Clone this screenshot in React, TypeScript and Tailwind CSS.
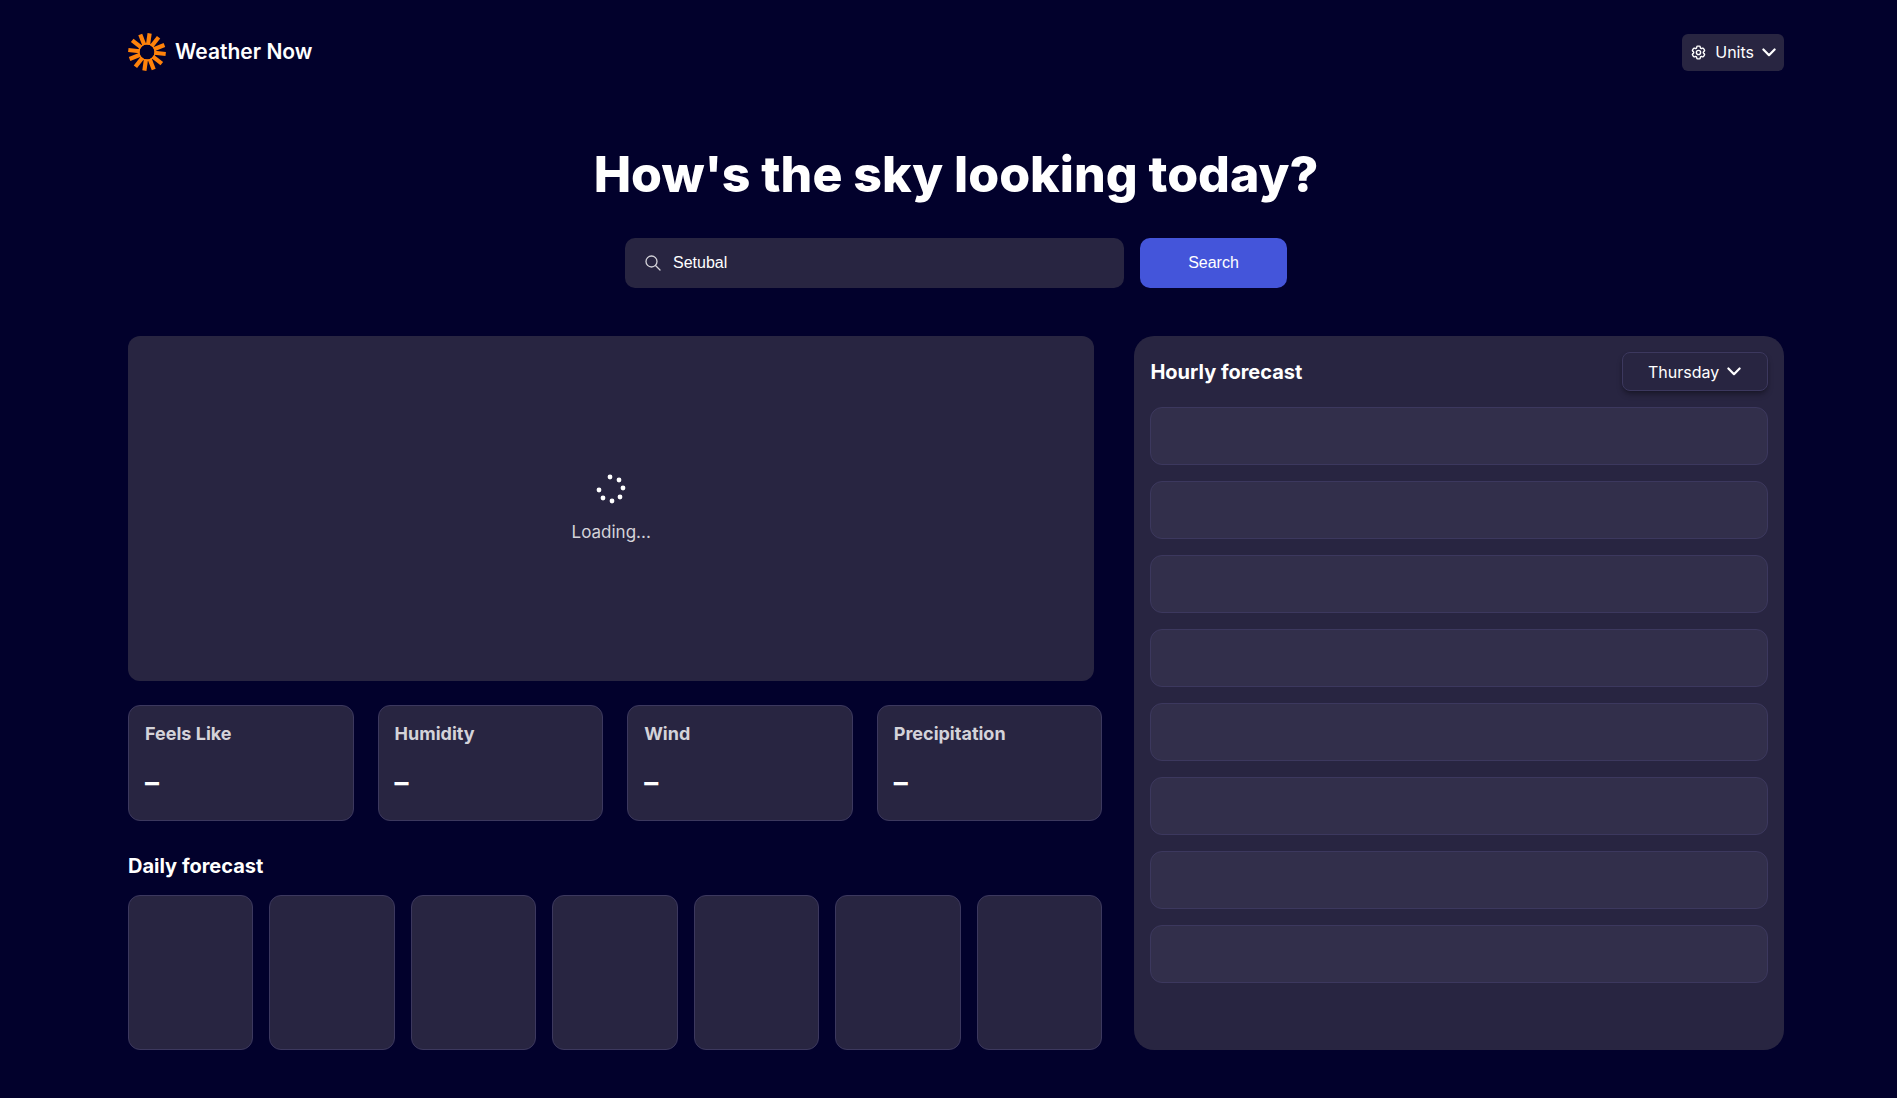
import React from "react";
import { HiOutlineCog6Tooth } from "react-icons/hi2";

const stats = ["Feels Like", "Humidity", "Wind", "Precipitation"];
const days = ["Monday", "Tuesday", "Wednesday", "Thursday", "Friday", "Saturday", "Sunday"];
const rays = [8, 38, 68, 96, 128, 159, 188, 218, 248, 276, 308, 339];
const dots = [
  [14, 3], [23, 6], [27, 14], [24, 23], [16, 27], [7, 24], [3, 16],
];

function SunLogo() {
  return (
    <svg viewBox="-19 -19 38 38" className="size-[38px]" aria-hidden="true">
      {rays.map((angle) => (
        <rect key={angle} x="-2.1" y="-18.8" width="4.2" height="11.4" fill="#ff820a" transform={`rotate(${angle})`} />
      ))}
      <circle r="8.2" fill="none" stroke="#ff820a" strokeWidth="1.4" />
    </svg>
  );
}

function Chevron() {
  return (
    <svg viewBox="0 0 14 9" className="h-[9px] w-3.5" fill="none" stroke="white" strokeWidth="2.2" strokeLinecap="round" strokeLinejoin="round" aria-hidden="true">
      <path d="M1.4 1.5 7 7.2l5.600-5.700" />
    </svg>
  );
}

export default function App() {
  return (
    <div className="min-h-screen bg-[#02012c] pt-8 pr-[113px] pb-12 pl-32 font-['Inter',sans-serif] text-white">
      <header className="flex h-10 items-center justify-between">
        <a href="#" className="flex items-center gap-[9px]">
          <SunLogo />
          <span className="text-[21px] font-semibold">Weather Now</span>
        </a>
        <button type="button" className="flex h-[37px] items-center gap-2 rounded-md bg-[#282541] px-2 text-base">
          <HiOutlineCog6Tooth className="size-[17px]" strokeWidth={2} aria-hidden="true" />
          Units
          <Chevron />
        </button>
      </header>

      <main>
        <h1 className="mt-[72px] text-center text-[50px] leading-[60px] font-extrabold">How's the sky looking today?</h1>

        <form className="mx-auto mt-[34px] flex w-full max-w-[662px] gap-4 font-['Liberation_Sans',sans-serif] text-base" onSubmit={(e) => e.preventDefault()}>
          <label className="flex h-[50px] flex-1 items-center gap-3 rounded-[10px] bg-[#282541] px-5">
            <svg viewBox="0 0 16 16" className="size-4" fill="none" stroke="#d4d3d9" strokeWidth="1.3" strokeLinecap="round" aria-hidden="true">
              <circle cx="6.5" cy="6.5" r="5.5" />
              <path d="M10.5 10.5 15 15" />
            </svg>
            <input type="text" aria-label="Search for a place" defaultValue="Setubal" className="min-w-0 flex-1 bg-transparent outline-none" />
          </label>
          <button type="submit" className="w-[147px] rounded-[10px] bg-[#4455da]">Search</button>
        </form>

        <div className="mt-12 grid grid-cols-[3fr_2fr] gap-8">
          <div className="flex flex-col">
            <section className="mr-2 flex h-[345px] flex-col items-center justify-center gap-4 rounded-xl bg-[#282541]">
              <svg viewBox="0 0 30 30" className="size-[30px]" fill="white" aria-hidden="true">
                {dots.map(([x, y]) => <circle key={x} cx={x} cy={y} r="2.4" />)}
              </svg>
              <p className="text-[17px] leading-6 text-[#d4d3d9]">Loading...</p>
            </section>

            <section className="mt-6 grid grid-cols-4 gap-6">
              {stats.map((name) => (
                <article key={name} className="flex h-[116px] flex-col gap-5 rounded-xl border border-[#3c385e] bg-[#282541] p-4">
                  <h3 className="text-lg leading-6 font-bold text-[#d4d3d9]">{name}</h3>
                  <p className="text-[28px] leading-8 font-bold">–</p>
                </article>
              ))}
            </section>

            <h2 className="mt-8 text-xl leading-[26px] font-bold">Daily forecast</h2>
            <section className="mt-4 grid grid-cols-7 gap-4">
              {days.map((day) => (
                <div key={day} className="h-[155px] rounded-xl border border-[#3c385e] bg-[#282541]" />
              ))}
            </section>
          </div>

          <section className="rounded-[20px] bg-[#282541] p-4">
            <div className="flex items-center justify-between">
              <h2 className="text-xl font-bold">Hourly forecast</h2>
              <div className="relative">
                <select aria-label="Day" defaultValue="Thursday" className="h-[39px] w-[146px] appearance-none rounded-lg border border-[#3c385e] bg-[#282541] pl-[25px] text-base shadow-md shadow-black/30">
                  {days.map((day) => <option key={day}>{day}</option>)}
                </select>
                <div className="pointer-events-none absolute inset-y-0 right-[27px] flex items-center">
                  <Chevron />
                </div>
              </div>
            </div>
            <ul className="mt-4 flex flex-col gap-4">
              {Array.from({ length: 8 }, (_, i) => (
                <li key={i} className="h-[58px] rounded-xl border border-[#3c385e] bg-[#322f4b]" />
              ))}
            </ul>
          </section>
        </div>
      </main>
    </div>
  );
}
